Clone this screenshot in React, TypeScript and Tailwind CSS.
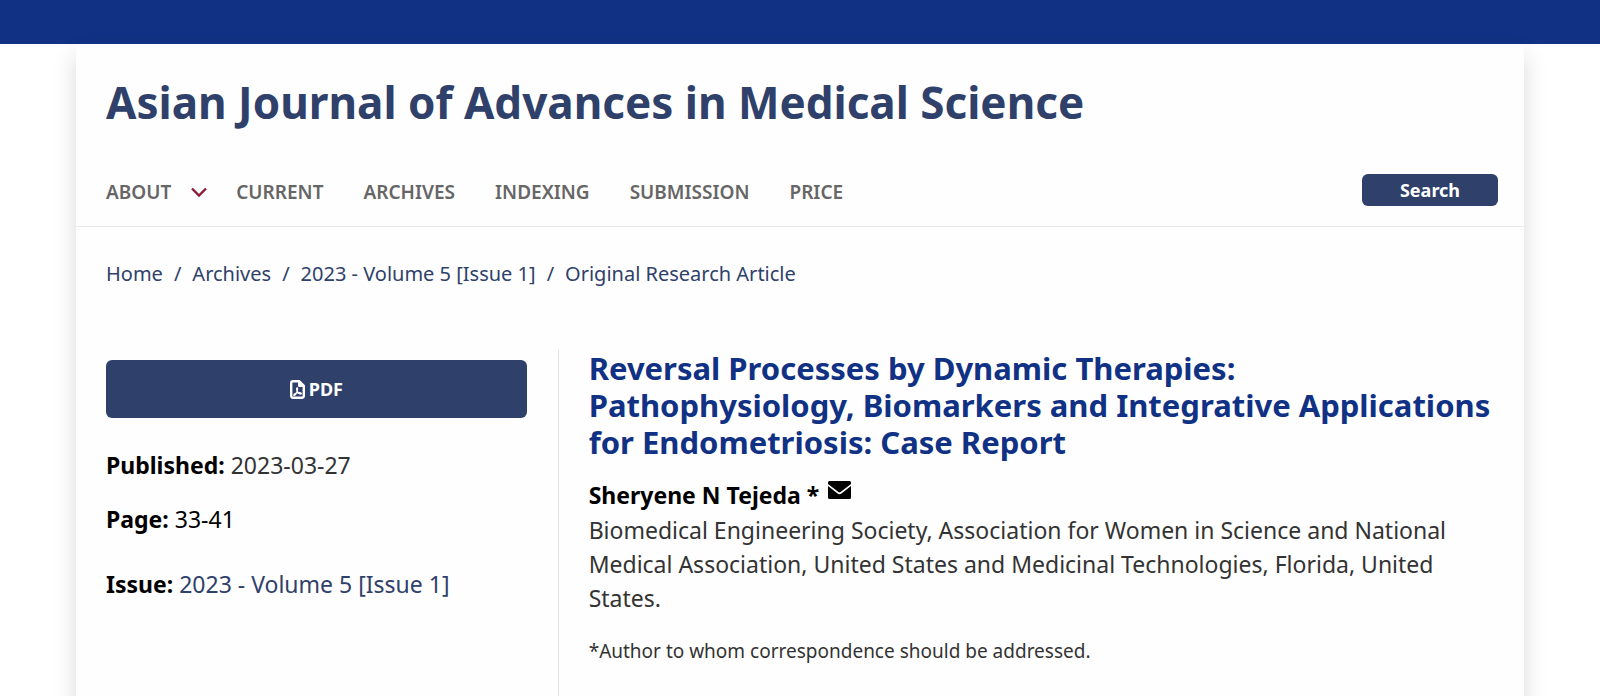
const navLinks = ['CURRENT', 'ARCHIVES', 'INDEXING', 'SUBMISSION', 'PRICE'];
const crumbs = ['Home', 'Archives', '2023 - Volume 5 [Issue 1]', 'Original Research Article'];

function PdfIcon() {
  return (
    <svg className="h-[19px] w-[15px]" viewBox="0 0 15 19" fill="none" stroke="currentColor">
      <path d="M3 1.2h6.2l4.6 4.6V16a1.8 1.8 0 0 1-1.8 1.8H3A1.8 1.8 0 0 1 1.2 16V3A1.8 1.8 0 0 1 3 1.2Z" strokeWidth="2.4" />
      <path d="M8.6 1.5v5h5Z" fill="currentColor" />
      <path
        d="M7.2 7.8c-1 0-.6 2.2.1 3.6.7 1.3 2 2.6 3.2 2.6 1.5 0 .9-1.5-1.3-1.4-2 .1-5.4 1.3-5.4 2.4 0 1 1.4.3 2.5-1.9.9-1.8 1.8-5.3.9-5.3Z"
        strokeWidth="1.3"
      />
    </svg>
  );
}

function EnvelopeIcon() {
  return (
    <svg className="h-[18px] w-[23px]" viewBox="0 0 23 18" fill="currentColor">
      <path d="M1.5 0h20A1.5 1.5 0 0 1 23 1.5v1.6L12.600 11a1.8 1.8 0 0 1-2.2 0L0 3.1V1.500A1.5 1.5 0 0 1 1.5 0Z" />
      <path d="M0 5v11.5A1.5 1.5 0 0 0 1.5 18h20a1.5 1.5 0 0 0 1.5-1.5V5l-9.6 7.4a3.1 3.1 0 0 1-3.800 0Z" />
    </svg>
  );
}

function Header() {
  return (
    <header className="border-b border-[#e9e9e9] px-[30px] pt-7 pb-5">
      <h1 className="text-[44px] leading-[60px] font-bold text-[#2f416a]">
        <a href="#">Asian Journal of Advances in Medical Science</a>
      </h1>
      <div className="mt-[42px] -mr-1 flex items-center justify-between">
        <nav className="flex gap-10 pt-1 text-[19px] leading-7 font-semibold text-[#666]">
          <div className="-mr-[11px] flex items-center gap-5">
            <a href="#">ABOUT</a>
            <button type="button" aria-label="Open About menu">
              <svg className="h-4 w-4" viewBox="0 0 16 16" fill="none" stroke="#8b1c36" strokeWidth="2.4">
                <path d="M1 4.5 8 11.5 15 4.5" />
              </svg>
            </button>
          </div>
          {navLinks.map((label) => (
            <a key={label} href="#">
              {label}
            </a>
          ))}
        </nav>
        <button
          type="button"
          className="h-8 w-[136px] rounded-md bg-[#2f416a] text-lg leading-8 font-bold text-white"
        >
          Search
        </button>
      </div>
    </header>
  );
}

function Breadcrumb() {
  return (
    <nav aria-label="Breadcrumb" className="px-[30px] pt-8">
      <ol className="flex flex-wrap text-[20px] leading-[30px] text-[#2f416a]">
        {crumbs.map((crumb, i) => (
          <li key={crumb} className="flex">
            {i > 0 && <span className="px-[11px]">/</span>}
            <a href="#">{crumb}</a>
          </li>
        ))}
      </ol>
    </nav>
  );
}

function ArticleSidebar() {
  return (
    <aside className="w-1/3 border-r border-[#dee2e6] pt-[10px] pr-[31px] pl-[30px] text-[23px] leading-[34px] text-black">
      <a
        href="#"
        className="flex h-[58px] items-center justify-center gap-1 rounded-md bg-[#2f416a] text-lg font-bold text-white"
      >
        <PdfIcon />
        PDF
      </a>
      <p className="mt-[30px]">
        <strong>Published:</strong> <span className="text-[#333]">2023-03-27</span>
      </p>
      <p className="mt-5">
        <strong>Page:</strong> 33-41
      </p>
      <p className="mt-[31px]">
        <strong>Issue:</strong>{' '}
        <a href="#" className="text-[#2f416a]">
          2023 - Volume 5 [Issue 1]
        </a>
      </p>
    </aside>
  );
}

function ArticleDetails() {
  return (
    <article className="w-2/3 px-[30px] pb-10 text-[#333]">
      <h2 className="text-[31px] leading-[37px] font-bold text-[#113284]">
        Reversal Processes by Dynamic Therapies: Pathophysiology, Biomarkers and Integrative Applications for
        Endometriosis: Case Report
      </h2>
      <div className="mt-[17px] flex text-[23px] leading-[34px] font-bold text-black">
        <span>Sheryene N Tejeda *</span>
        <a href="#" aria-label="Email the author" className="ml-[9px] pt-[3px]">
          <EnvelopeIcon />
        </a>
      </div>
      <p className="mt-px text-[23px] leading-[34px]">
        Biomedical Engineering Society, Association for Women in Science and National Medical Association, United
        States and Medicinal Technologies, Florida, United States.
      </p>
      <p className="mt-[22px] text-[19px] leading-7">*Author to whom correspondence should be addressed.</p>
    </article>
  );
}

export default function App() {
  return (
    <div className="flex min-h-screen flex-col bg-white font-['Noto_Sans',sans-serif]">
      <div className="h-11 bg-[#113284]" />
      <main className="mx-[76px] flex grow flex-col bg-[#fefefe] shadow-[0_11px_22px_rgba(0,0,0,0.15)]">
        <Header />
        <Breadcrumb />
        <div className="mt-[61px] flex grow">
          <ArticleSidebar />
          <ArticleDetails />
        </div>
      </main>
    </div>
  );
}
